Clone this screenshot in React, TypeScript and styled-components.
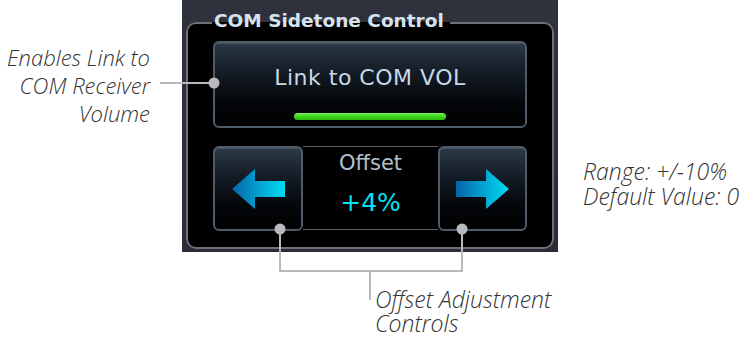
import styled, { createGlobalStyle } from 'styled-components'

const GlobalStyle = createGlobalStyle`
  html, body {
    margin: 0;
    padding: 0;
    background: #ffffff;
  }
  body {
    font-family: 'Open Sans', 'Noto Sans', sans-serif;
  }
`

const ArrowIcon = ({ direction }: { direction: 'left' | 'right' }) => {
  const id = `arrow-grad-${direction}`
  const points =
    direction === 'left'
      ? '0,20 23,0 23,12 53,12 53,28 23,28 23,40'
      : '53,20 30,0 30,12 0,12 0,28 30,28 30,40'
  return (
    <svg width="53" height="40" viewBox="0 0 53 40">
      <defs>
        <linearGradient id={id} x1="0" y1="0" x2="1" y2="0">
          <stop offset="0" stopColor="#0565a8" />
          <stop offset="1" stopColor="#00dcf4" />
        </linearGradient>
      </defs>
      <polygon points={points} fill={`url(#${id})`} />
    </svg>
  )
}

const Leaders = () => (
  <LeaderLayer width="741" height="337" viewBox="0 0 741 337">
    <g stroke="#b9b9bd" strokeWidth="2" fill="none">
      <line x1="160" y1="83" x2="214" y2="83" />
      <polyline points="280,229 280,271 462,271 462,229" />
      <line x1="370" y1="271" x2="370" y2="300" />
    </g>
    <g fill="#b9b9bd">
      <circle cx="214" cy="83" r="5.5" />
      <circle cx="280" cy="229" r="5.5" />
      <circle cx="462" cy="229" r="5.5" />
    </g>
  </LeaderLayer>
)

export default function App() {
  return (
    <>
      <GlobalStyle />
      <Page>
        <LeftNote>
          Enables Link to
          <br />
          COM Receiver
          <br />
          Volume
        </LeftNote>
        <Bezel>
          <Frame>
            <Title>COM Sidetone Control</Title>
            <LinkButton>
              <LinkLabel>Link to COM VOL</LinkLabel>
              <ActiveBar />
            </LinkButton>
            <OffsetRow>
              <ArrowButton $width={90}>
                <ArrowIcon direction="left" />
              </ArrowButton>
              <OffsetReadout>
                <OffsetLabel>Offset</OffsetLabel>
                <OffsetValue>+4%</OffsetValue>
              </OffsetReadout>
              <ArrowButton $width={89}>
                <ArrowIcon direction="right" />
              </ArrowButton>
            </OffsetRow>
          </Frame>
        </Bezel>
        <RightNote>
          Range: +/-10%
          <br />
          Default Value: 0
        </RightNote>
        <BottomNote>
          Offset Adjustment
          <br />
          Controls
        </BottomNote>
        <Leaders />
      </Page>
    </>
  )
}

const Page = styled.div`
  position: relative;
  width: 741px;
  height: 337px;
  display: grid;
  grid-template-columns: 182px 376px 1fr;
  grid-template-rows: 252px 1fr;
  overflow: hidden;
`

const Note = styled.div`
  font-family: 'Open Sans', 'Noto Sans', sans-serif;
  font-style: italic;
  font-weight: 300;
  color: #333333;
`

const LeftNote = styled(Note)`
  font-size: 22px;
  line-height: 28px;
  text-align: right;
  padding: 43px 32px 0 0;
`

const RightNote = styled(Note)`
  font-size: 23px;
  line-height: 25px;
  padding: 159px 0 0 25px;
`

const BottomNote = styled(Note)`
  grid-column: 1 / -1;
  font-size: 23px;
  line-height: 24px;
  padding: 35px 0 0 375px;
`

const LeaderLayer = styled.svg`
  position: absolute;
  left: 0;
  top: 0;
  pointer-events: none;
`

const Bezel = styled.div`
  background: linear-gradient(180deg, #2f323d 0%, #2a2d37 100%);
  padding: 10px 4px 3px;
`

const Frame = styled.fieldset`
  margin: 0;
  padding: 5px 25px 16px;
  border: 2px solid #6d7079;
  border-radius: 10px;
  background: #000;
  min-width: 0;
  font-family: 'DejaVu Sans', 'Open Sans', sans-serif;
`

const Title = styled.legend`
  margin-left: -1px;
  padding: 0 6px 4px 2px;
  font-size: 18.5px;
  line-height: 22px;
  font-weight: 700;
  color: #d6e2ee;
`

const buttonSkin = `
  border: 2px solid #4e5b69;
  border-radius: 6px;
  background: linear-gradient(180deg, #2d3947 0%, #141c25 35%, #05080b 70%, #000 100%);
  box-shadow: inset 0 1px 0 rgba(150, 170, 190, 0.25);
  box-sizing: border-box;
`

const LinkButton = styled.div`
  ${buttonSkin}
  height: 87px;
  display: flex;
  flex-direction: column;
  align-items: center;
  padding-top: 23px;
`

const LinkLabel = styled.div`
  font-size: 22px;
  line-height: 24px;
  letter-spacing: 0.5px;
  color: #c9d8e8;
`

const ActiveBar = styled.div`
  margin-top: 23px;
  width: 152px;
  height: 7px;
  border-radius: 4px;
  background: linear-gradient(180deg, #7cf55a 0%, #3fd61c 50%, #2bb80e 100%);
`

const OffsetRow = styled.div`
  margin-top: 18px;
  height: 85px;
  display: flex;
`

const ArrowButton = styled.div<{ $width: number }>`
  ${buttonSkin}
  width: ${(p) => p.$width}px;
  flex: none;
  display: flex;
  align-items: center;
  justify-content: center;
`

const OffsetReadout = styled.div`
  flex: 1;
  display: flex;
  flex-direction: column;
  align-items: center;
  border-top: 1px solid #5d6068;
  border-bottom: 1px solid #5d6068;
  margin-bottom: 1px;
  padding-top: 5px;
`

const OffsetLabel = styled.div`
  font-size: 21px;
  line-height: 22px;
  color: #b3c0cd;
`

const OffsetValue = styled.div`
  margin-top: 14px;
  font-size: 25px;
  line-height: 30px;
  color: #00e2f2;
`
